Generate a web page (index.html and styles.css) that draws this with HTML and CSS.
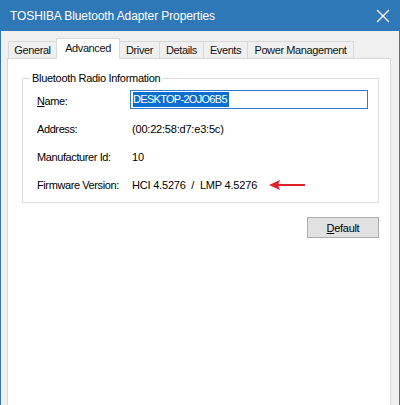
FILE: index.html
```html
<!DOCTYPE html>
<html>
<head>
<meta charset="utf-8">
<link rel="stylesheet" href="styles.css">
</head>
<body>
<div class="window">
  <div class="titlebar">
    <span class="title">TOSHIBA Bluetooth Adapter Properties</span>
    <svg class="close" width="14" height="14" viewBox="0 0 14 14"><path d="M1 1 L13 13 M13 1 L1 13" stroke="#ffffff" stroke-width="1.3" fill="none"/></svg>
  </div>
  <div class="tabs">
    <div class="tab t-general">General</div>
    <div class="tab t-advanced active">Advanced</div>
    <div class="tab t-driver">Driver</div>
    <div class="tab t-details">Details</div>
    <div class="tab t-events">Events</div>
    <div class="tab t-power">Power Management</div>
  </div>
  <div class="panel">
    <fieldset class="group">
      <legend>Bluetooth Radio Information</legend>
      <div class="rows">
        <div class="label"><u>N</u>ame:</div>
        <div class="value"><div class="textbox"><span class="sel">DESKTOP-2OJO6B5</span></div></div>
        <div class="label">Address:</div>
        <div class="value text">(00:22:58:d7:e3:5c)</div>
        <div class="label">Manufacturer Id:</div>
        <div class="value text">10</div>
        <div class="label">Firmware Version:</div>
        <div class="value text"><span class="fw">HCI 4.5276  /  LMP 4.5276</span><svg class="arrow" width="36" height="12" viewBox="0 0 36 12"><path d="M8 6 L36 6" stroke="#e0202a" stroke-width="2" fill="none"/><path d="M0 6 L11 1 L9 6 L11 11 Z" fill="#e0202a"/></svg></div>
      </div>
    </fieldset>
    <div class="actions">
      <button class="btn"><u>D</u>efault</button>
    </div>
  </div>
</div>
</body>
</html>
```
FILE: styles.css
```css
html, body {
  margin: 0;
  padding: 0;
}
body {
  width: 400px;
  height: 405px;
  overflow: hidden;
  font-family: "Liberation Sans", Arial, sans-serif;
  font-size: 11px;
  color: #000;
}
.window {
  box-sizing: border-box;
  width: 400px;
  height: 405px;
  background: #f0f0f0;
  border-left: 1px solid #2f78b8;
  border-right: 1px solid #2f78b8;
  display: flex;
  flex-direction: column;
}
.titlebar {
  height: 31px;
  flex: none;
  background: #2f78b8;
  color: #fff;
  display: flex;
  align-items: center;
  justify-content: space-between;
  padding: 0 9px 0 9px;
}
.title {
  font-size: 12px;
  letter-spacing: -0.1px;
}
.close {
  margin-top: 1px;
}
.tabs {
  flex: none;
  display: flex;
  align-items: flex-end;
  height: 20px;
  margin-top: 7px;
  margin-left: 7px;
  position: relative;
  z-index: 1;
}
.tab {
  box-sizing: border-box;
  height: 17px;
  border: 1px solid #d9d9d9;
  border-bottom: none;
  border-left: none;
  background: #f0f0f0;
  display: flex;
  align-items: center;
  justify-content: center;
  letter-spacing: -0.4px;
  color: #111;
}
.t-general { width: 49px; border-left: 1px solid #d9d9d9; }
.t-advanced { width: 63px; }
.t-driver { width: 40px; }
.t-details { width: 44px; }
.t-events { width: 44px; }
.t-power { width: 106px; }
.tab.active {
  height: 21px;
  margin-bottom: -1px;
  background: #fff;
  border-left: 1px solid #d9d9d9;
  margin-left: -1px;
  align-items: flex-start;
  padding-top: 3px;
  width: 64px;
}
.panel {
  flex: 1;
  margin: 0 8px 0 6px;
  background: #fff;
  border: 1px solid #d9d9d9;
  border-bottom: none;
}
.group {
  margin: 12px 11px 0 14px;
  padding: 1px 0 4px 14px;
  border: 1px solid #dcdcdc;
}
.group legend {
  padding: 0 2px;
  margin-left: -7px;
  line-height: 14px;
  letter-spacing: -0.3px;
}
.rows {
  display: grid;
  grid-template-columns: 93px 1fr;
  grid-auto-rows: 28px;
  align-items: center;
}
.label {
  letter-spacing: -0.4px;
  padding-top: 1px;
}
.value.text {
  padding-left: 2px;
  letter-spacing: -0.2px;
  display: flex;
  align-items: center;
  padding-top: 1px;
}
.fw {
  white-space: pre;
}
.arrow {
  margin-left: 12px;
}
.textbox {
  box-sizing: border-box;
  width: 238px;
  height: 19px;
  margin-top: -2px;
  border: 1px solid #2e7bd0;
  padding: 1px 2px;
  display: flex;
  align-items: center;
  letter-spacing: -0.7px;
}
.sel {
  background: #0a6fd0;
  color: #fff;
  line-height: 15px;
  padding-right: 2px;
}
.actions {
  display: flex;
  justify-content: flex-end;
  margin: 14px 11px 0 0;
}
.btn {
  box-sizing: border-box;
  width: 72px;
  height: 21px;
  background: #e1e1e1;
  border: 1px solid #adadad;
  font-family: "Liberation Sans", Arial, sans-serif;
  font-size: 11px;
  letter-spacing: -0.3px;
  color: #000;
  padding: 0;
}
```
